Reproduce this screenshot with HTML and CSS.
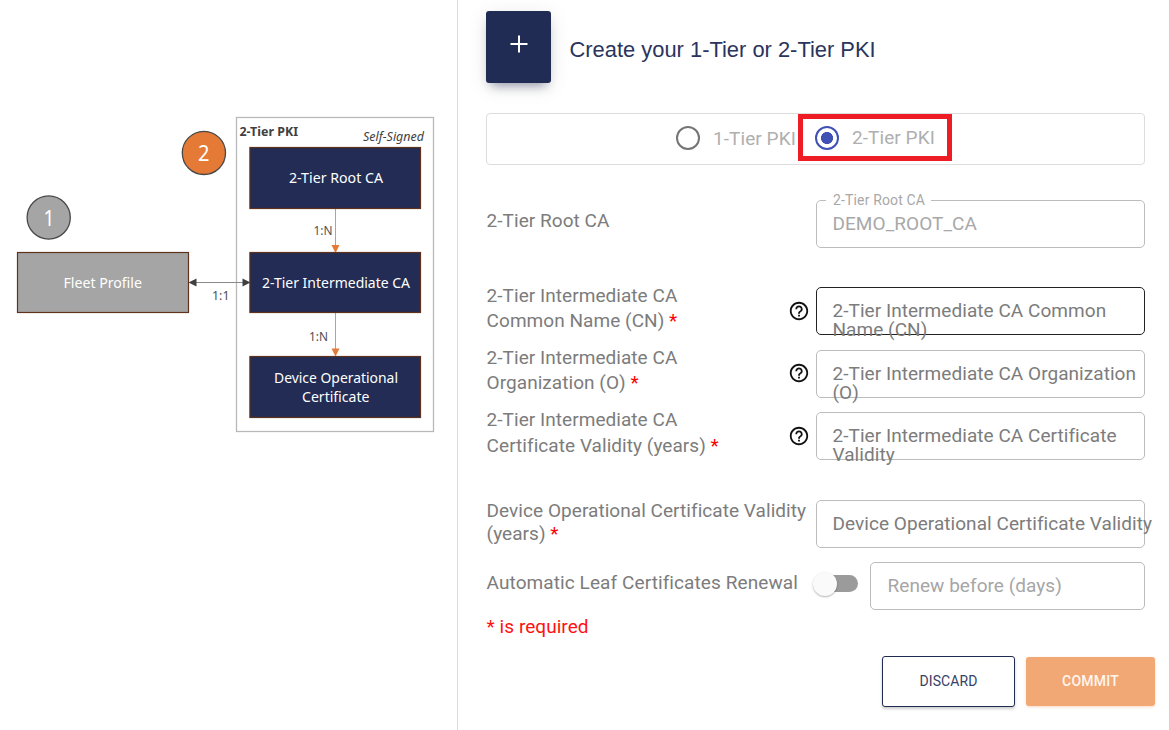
FILE: index.html
```html
<!DOCTYPE html>
<html lang="en">
<head>
<meta charset="utf-8">
<title>Create PKI</title>
<link rel="stylesheet" href="styles.css">
</head>
<body>
<svg class="defs" width="0" height="0"><defs>
  <symbol id="help" viewBox="0 0 24 24"><path d="M11 18h2v-2h-2v2zm1-16C6.480 2 2 6.480 2 12s4.480 10 10 10 10-4.480 10-10S17.520 2 12 2zm0 18c-4.410 0-8-3.590-8-8s3.590-8 8-8 8 3.590 8 8-3.590 8-8 8zm0-14c-2.210 0-4 1.790-4 4h2c0-1.100.9-2 2-2s2 .9 2 2c0 2-3 1.750-3 5h2c0-2.250 3-2.500 3-5 0-2.210-1.790-4-4-4z"/></symbol>
</defs></svg>
<div class="page">
  <aside class="diagram">
    <svg width="457" height="730" viewBox="0 0 457 730">
      <rect class="group" x="236.500" y="117.500" width="197" height="314"/>
      <path class="link" d="M194 282.500H245"/>
      <path class="head" d="M188.500 282.500l8-4v8zM250.500 282.500l-8-4v8z"/>
      <path class="flow" d="M335.500 209V246M335.500 313V350"/>
      <path class="flow-head" d="M331.500 245h8l-4 8zM331.500 348.500h8l-4 8z"/>
      <rect class="node" x="249.900" y="147.500" width="170.600" height="61"/>
      <rect class="node" x="249.900" y="252.500" width="170.600" height="60"/>
      <rect class="node" x="249.900" y="356.500" width="170.600" height="61"/>
      <rect class="node fleet" x="17.500" y="252.500" width="171" height="60"/>
      <circle class="step" cx="48.700" cy="217.500" r="21.600"/>
      <circle class="step active" cx="203.900" cy="152.900" r="21.600"/>
      <text class="num" x="43.500" y="225.500" textLength="11" lengthAdjust="spacingAndGlyphs">1</text>
      <text class="num" x="198" y="160.500" textLength="11.500" lengthAdjust="spacingAndGlyphs">2</text>
      <text class="name" x="63.500" y="287.500" textLength="78.500" lengthAdjust="spacingAndGlyphs">Fleet Profile</text>
      <text class="name" x="289" y="183" textLength="94" lengthAdjust="spacingAndGlyphs">2-Tier Root CA</text>
      <text class="name" x="262" y="287.500" textLength="148" lengthAdjust="spacingAndGlyphs">2-Tier Intermediate CA</text>
      <text class="name" x="274" y="382.500" textLength="124" lengthAdjust="spacingAndGlyphs">Device Operational</text>
      <text class="name" x="302" y="402" textLength="67.500" lengthAdjust="spacingAndGlyphs">Certificate</text>
      <text class="title" x="239.500" y="136" textLength="58.500" lengthAdjust="spacingAndGlyphs">2-Tier PKI</text>
      <text class="note" x="363" y="141" textLength="61" lengthAdjust="spacingAndGlyphs">Self-Signed</text>
      <text class="ratio" x="313.500" y="235" textLength="19" lengthAdjust="spacingAndGlyphs">1:N</text>
      <text class="ratio" x="309" y="340.500" textLength="19" lengthAdjust="spacingAndGlyphs">1:N</text>
      <text class="ratio" x="212" y="300" textLength="17.500" lengthAdjust="spacingAndGlyphs">1:1</text>
    </svg>
  </aside>
  <main class="panel">
    <header class="header">
      <div class="add"><svg width="18" height="18" viewBox="0 0 18 18"><path d="M9 .5v17M.5 9h17"/></svg></div>
      <h1>Create your 1-Tier or 2-Tier PKI</h1>
    </header>
    <div class="tiers">
      <label class="option"><span class="radio"></span>1-Tier PKI</label>
      <label class="option chosen"><span class="radio on"></span>2-Tier PKI</label>
    </div>
    <div class="row root">
      <div class="label">2-Tier Root CA</div><span></span>
      <div class="field disabled"><span class="legend">2-Tier Root CA</span>DEMO_ROOT_CA</div>
    </div>
    <div class="row common">
      <div class="label">2-Tier Intermediate CA<br>Common Name (CN) <b>*</b></div>
      <svg class="help"><use href="#help"/></svg>
      <div class="field focus">2-Tier Intermediate CA Common<br>Name (CN)</div>
    </div>
    <div class="row org">
      <div class="label">2-Tier Intermediate CA<br>Organization (O) <b>*</b></div>
      <svg class="help"><use href="#help"/></svg>
      <div class="field">2-Tier Intermediate CA Organization<br>(O)</div>
    </div>
    <div class="row validity">
      <div class="label">2-Tier Intermediate CA<br>Certificate Validity (years) <b>*</b></div>
      <svg class="help"><use href="#help"/></svg>
      <div class="field">2-Tier Intermediate CA Certificate<br>Validity</div>
    </div>
    <div class="row device">
      <div class="label">Device Operational Certificate Validity<br>(years) <b>*</b></div><span></span>
      <div class="field">Device Operational Certificate Validity</div>
    </div>
    <div class="row renewal">
      <div class="label">Automatic Leaf Certificates Renewal</div>
      <div class="toggle"><span class="thumb"></span></div>
      <div class="field muted">Renew before (days)</div>
    </div>
    <p class="required">* is required</p>
    <div class="actions">
      <button class="btn discard">DISCARD</button>
      <button class="btn commit">COMMIT</button>
    </div>
  </main>
</div>
</body>
</html>
```
FILE: styles.css
```css
* { box-sizing: border-box; }
body { margin: 0; background: #fff; font-family: Roboto, sans-serif; overflow: hidden; }
.defs { position: absolute; }
.page { display: flex; width: 1169px; height: 730px; }

.diagram { width: 457px; flex: none; font-family: "Noto Sans", sans-serif; }
.diagram svg { display: block; }
.group { fill: #fff; stroke: #b9b9b9; stroke-width: 1.3; }
.node { fill: #232c54; stroke: #5f321b; stroke-width: 1.2; }
.node.fleet { fill: #a5a5a5; }
.step { fill: #a5a5a5; stroke: #484848; stroke-width: 1.3; }
.step.active { fill: #e57a37; }
.link { stroke: #8a8a8a; }
.head { fill: #404040; }
.flow { stroke: #e8935f; }
.flow-head { fill: #e57a37; }
.num { fill: #fff; font-size: 21px; }
.name { fill: #fff; font-size: 14px; }
.title { fill: #404040; font-size: 12.5px; font-weight: 700; }
.note { fill: #404040; font-size: 12px; font-style: italic; }
.ratio { fill: #505050; font-size: 12px; }

.panel { width: 712px; border-left: 1px solid #dcdcdc; padding: 11px 14px 0 28px; }
.header { display: flex; height: 72px; }
.add { width: 65px; height: 72px; border-radius: 3px; background: #212c55; box-shadow: 0 4px 20px rgba(0,0,0,.10), 0 7px 10px -5px rgba(33,44,85,.45); padding: 24px 0 0 24px; }
.add svg { display: block; fill: none; stroke: #fff; stroke-width: 2; }
h1 { margin: 25px 0 0 18.500px; font: 400 21.900px/28px "Liberation Sans", Arial, sans-serif; color: #2a345c; white-space: nowrap; }

.tiers { display: flex; width: 659px; height: 52px; margin-top: 30px; border: 1px solid #ddd; border-radius: 4px; padding-left: 189px; }
.option { display: flex; align-items: center; color: #afafaf; font-size: 19px; letter-spacing: .07px; white-space: nowrap; width: 122px; height: 48px; }
.radio { flex: none; width: 24px; height: 24px; border: 2.500px solid #757575; border-radius: 50%; margin-right: 13px; }
.radio.on { border-color: #3f51b5; background: radial-gradient(circle, #3f51b5 5.700px, transparent 6.300px); }
.chosen { width: 154px; height: 47px; border: 5px solid #ee1c25; padding-left: 12px; }

.row { display: grid; grid-template-columns: 302px 28px 329px; height: 48px; color: #7c7c7c; font-size: 19px; letter-spacing: .05px; }
.label { padding-left: .6px; line-height: 25px; white-space: nowrap; }
.label b { color: #f00; font-weight: 400; }
.help { width: 22px; height: 22px; margin: 13px 0 0; fill: #111; }
.org .help { margin-top: 12px; }
.field { position: relative; height: 48px; border: 1px solid #bcbcbc; border-radius: 5px; padding: 13px 0 0 15.500px; line-height: 19px; white-space: nowrap; }
.focus { border-color: #222; }
.disabled { color: #a8a8a8; }
.muted { color: #a6a6a6; }
.legend { position: absolute; left: 9px; top: -10px; padding: 0 6px 0 7px; background: #fff; font-size: 14px; line-height: 18px; letter-spacing: .15px; }
.root { margin-top: 35px; }
.root .label { padding-top: 8px; }
.common { margin-top: 39px; }
.common .label { margin-top: -4px; }
.org .label, .validity .label { margin-top: -5px; }
.validity .label { line-height: 25.500px; }
.org { margin-top: 15px; }
.validity { margin-top: 14px; }
.device { margin-top: 40px; }
.device .label { line-height: 23px; margin-top: -1px; }
.renewal { margin-top: 14px; grid-template-columns: 326px 58px 275px; }
.renewal .label { padding-top: 8px; letter-spacing: .09px; }
.renewal .field { padding-left: 16.500px; }
.toggle { width: 46px; height: 17px; margin-top: 13px; border-radius: 9px; background: linear-gradient(90deg, transparent 10px, #9b9b9b 10px); }
.thumb { display: block; width: 24px; height: 24px; margin: -3px 0 0 1px; border-radius: 50%; background: #fafafa; box-shadow: 0 1px 2px rgba(0,0,0,.3); }
.required { margin: 5px 0 0 .6px; color: #f11; font-size: 19px; line-height: 24px; letter-spacing: .05px; }
.actions { display: flex; justify-content: flex-end; align-items: center; gap: 11px; margin-top: 17px; }
.btn { padding: 0 0 2px; border-radius: 3px; font: 400 14px Roboto, sans-serif; }
.discard { width: 133px; height: 51px; border: 1px solid #212c55; background: #fff; color: #384166; letter-spacing: .1px; box-shadow: 0 2px 3px rgba(0,0,0,.2); }
.commit { width: 129px; height: 49px; border: 0; background: #f1a875; color: #fff6ee; font-weight: 500; letter-spacing: .2px; box-shadow: 0 1px 3px rgba(241,168,117,.4); }
```
